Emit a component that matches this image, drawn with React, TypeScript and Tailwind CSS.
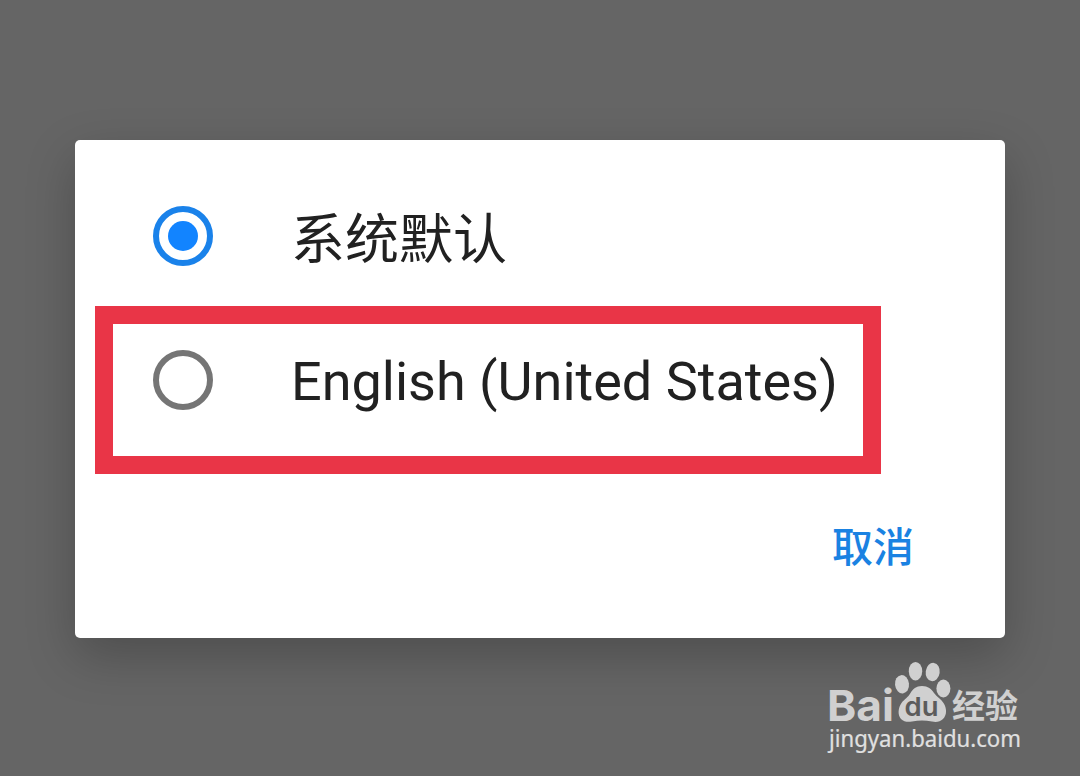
import { useState } from 'react';

const LANGUAGES = [
  { id: 'system', label: '系统默认', nudge: 'pt-[9px]' },
  { id: 'en-US', label: 'English (United States)', nudge: 'pt-[3px]' },
];

function Radio({ checked }: { checked: boolean }) {
  return (
    <svg viewBox="0 0 60 60" className="w-[60px] h-[60px] shrink-0">
      <circle cx="30" cy="30" r="27" fill="none" strokeWidth="6" stroke={checked ? '#1a82ea' : '#757575'} />
      {checked && <circle cx="30" cy="30" r="15" fill="#1284ff" />}
    </svg>
  );
}

function Watermark() {
  return (
    <svg viewBox="820 655 210 110" className="absolute left-[820px] top-[655px] w-[210px] h-[110px] overflow-visible" fill="#d0d0d0">
      <text x="827" y="720.5" fontSize="43" fontWeight="700" textLength="67" lengthAdjust="spacingAndGlyphs" className="font-[Inter,sans-serif]">Bai</text>
      {/* Paw */}
      <ellipse cx="902" cy="684.3" rx="7" ry="9.2" transform="rotate(-6 902 684.3)" />
      <ellipse cx="915.5" cy="671.2" rx="6.7" ry="9.3" />
      <ellipse cx="932.7" cy="672" rx="7" ry="9.2" transform="rotate(8 932.7 672)" />
      <ellipse cx="943.4" cy="688.5" rx="7" ry="9" />
      <path d="M922 686c6 0 9.500 3 12 7 3 4 7 6 9.500 10 3.500 5.500 3.500 12-.5 16-3 3-7 3.300-11 2.500-7-1.300-13-1.300-20 0-4 .7-8 .5-11-2.500-3.500-4-3-11 .5-16 3-4 6.500-5.500 9-10 2.500-4 5.500-7 11.500-7z" />
      <text x="904.500" y="716" fontSize="26" fontWeight="600" textLength="34" lengthAdjust="spacingAndGlyphs" fill="#5c5c5c" className="font-[Inter,sans-serif]">du</text>
      <text x="952" y="718" fontSize="33" fontWeight="700" textLength="66" lengthAdjust="spacingAndGlyphs" className="font-['Noto_Sans_CJK_SC',sans-serif]">经验</text>
      <text x="829" y="746.5" fontSize="23" textLength="192" lengthAdjust="spacingAndGlyphs" fill="#e0e0e0" stroke="#e0e0e0" strokeWidth="0.2" className="font-['Noto_Sans',sans-serif]">jingyan.baidu.com</text>
    </svg>
  );
}

export default function App() {
  const [selected, setSelected] = useState('system');

  return (
    <main className="relative w-[1080px] h-[776px] overflow-hidden bg-[#656565] pt-[140px] font-[Roboto,'Noto_Sans_CJK_SC',sans-serif]">
      <div role="dialog" className="relative mx-auto w-[930px] h-[498px] rounded-[5px] bg-white pt-6 shadow-[0_18px_50px_rgba(0,0,0,0.23)]">
        <div role="radiogroup">
          {LANGUAGES.map(lang => (
            <button
              key={lang.id}
              role="radio"
              aria-checked={selected === lang.id}
              onClick={() => setSelected(lang.id)}
              className="flex w-full h-36 items-center gap-[78px] pl-[78px] text-left"
            >
              <Radio checked={selected === lang.id} />
              <span className={`text-[54px] leading-[64px] text-[#212121] whitespace-nowrap ${lang.nudge}`}>{lang.label}</span>
            </button>
          ))}
        </div>

        <div className="flex justify-end pr-[91px] pt-[66px]">
          <button className="text-[41px] leading-[60px] font-medium text-[#1a82e2]">取消</button>
        </div>

        {/* Highlight around the English row */}
        <div className="absolute left-[20px] top-[166px] w-[786px] h-[168px] border-[18px] border-[#e93547] pointer-events-none" />
      </div>

      <Watermark />
    </main>
  );
}
